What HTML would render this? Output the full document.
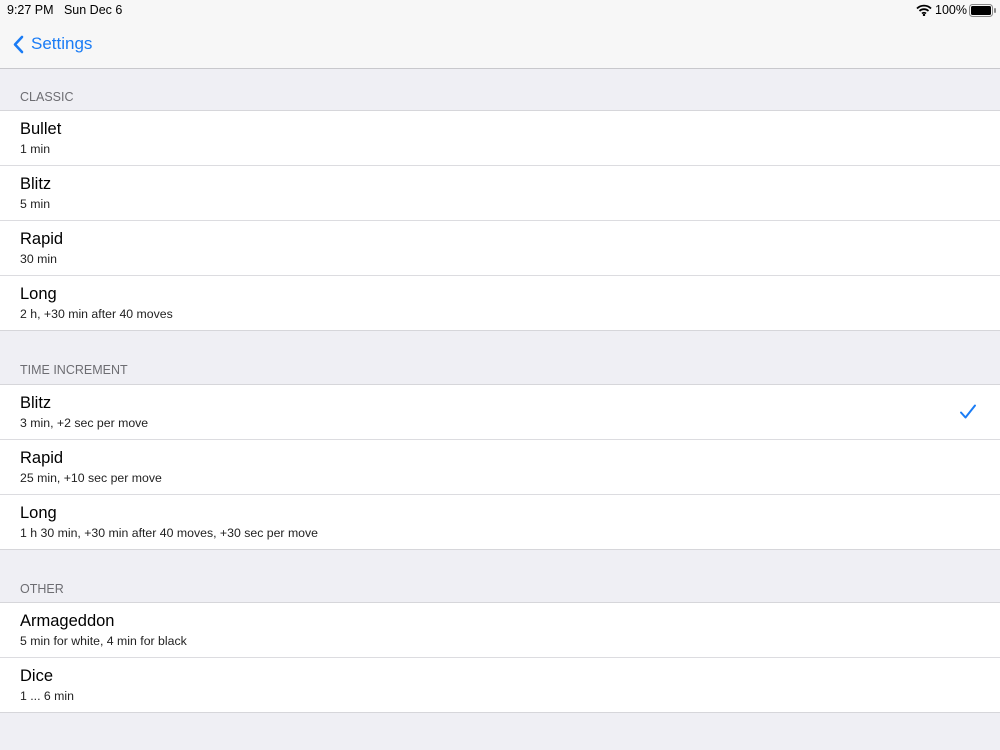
<!DOCTYPE html>
<html><head><meta charset="utf-8"><style>
body{margin:0;width:1000px;height:750px;background:#efeff4;font-family:"Liberation Sans",sans-serif;position:relative;overflow:hidden}
.nav{position:absolute;left:0;top:0;width:1000px;height:68px;background:#f7f7f7;border-bottom:1px solid #c8c8cc}
.st{position:absolute;top:3px;font-size:12.5px;color:#000}
.back{position:absolute;left:31px;top:34px;font-size:17px;color:#1a7cf5}
.hdr{position:absolute;left:20px;font-size:12.5px;color:#6d6d72}
.grp{position:absolute;left:0;width:1000px;background:#fff;border-top:1px solid #d6d6da;border-bottom:1px solid #d6d6da}
.row{height:54px;border-bottom:1px solid #dcdce0;position:relative}
.row:last-child{border-bottom:none;height:54px}
.t{position:absolute;left:20px;top:9px;font-size:16.5px;color:#000}
.s{position:absolute;left:20px;top:31px;font-size:12.3px;color:#222}
</style></head><body>
<div class="nav">
<div class="st" style="left:7px">9:27 PM&nbsp;&nbsp;&nbsp;Sun Dec 6</div>
<svg style="position:absolute;left:916px;top:4px" width="16" height="12" viewBox="0 0 16 12"><path d="M1 4.5a10 10 0 0 1 14 0M3.5 7a6.5 6.5 0 0 1 9 0M6 9.5a3 3 0 0 1 4 0" stroke="#000" stroke-width="1.8" fill="none"/><circle cx="8" cy="11" r="1.2"/></svg>
<div class="st" style="left:935px">100%</div>
<svg style="position:absolute;left:969px;top:4px" width="28" height="13"><rect x="0.5" y="0.5" width="23" height="12" rx="3" fill="none" stroke="#888"/><rect x="2" y="2" width="20" height="9" rx="1.5"/><rect x="25" y="4" width="2" height="5" rx="1" fill="#888"/></svg>
<svg style="position:absolute;left:12px;top:35px" width="12" height="19"><path d="M10 2L3 9.5L10 17" stroke="#1a7cf5" stroke-width="2.6" fill="none" stroke-linecap="round" stroke-linejoin="round"/></svg>
<div class="back">Settings</div>
</div>
<div class="hdr" style="top:90px">CLASSIC</div>
<div class="grp" style="top:110px">
<div class="row"><div class="t">Bullet</div><div class="s">1 min</div></div>
<div class="row"><div class="t">Blitz</div><div class="s">5 min</div></div>
<div class="row"><div class="t">Rapid</div><div class="s">30 min</div></div>
<div class="row"><div class="t">Long</div><div class="s">2 h, +30 min after 40 moves</div></div>
</div>
<div class="hdr" style="top:363px">TIME INCREMENT</div>
<div class="grp" style="top:384px">
<div class="row"><div class="t">Blitz</div><div class="s">3 min, +2 sec per move</div>
<svg style="position:absolute;left:959px;top:19px" width="18" height="16"><path d="M2 8.5L6.5 13.5L16 1.5" stroke="#1a7cf5" stroke-width="2" fill="none" stroke-linecap="round" stroke-linejoin="round"/></svg></div>
<div class="row"><div class="t">Rapid</div><div class="s">25 min, +10 sec per move</div></div>
<div class="row"><div class="t">Long</div><div class="s">1 h 30 min, +30 min after 40 moves, +30 sec per move</div></div>
</div>
<div class="hdr" style="top:582px">OTHER</div>
<div class="grp" style="top:602px">
<div class="row"><div class="t">Armageddon</div><div class="s">5 min for white, 4 min for black</div></div>
<div class="row"><div class="t">Dice</div><div class="s">1 ... 6 min</div></div>
</div>
</body></html>
